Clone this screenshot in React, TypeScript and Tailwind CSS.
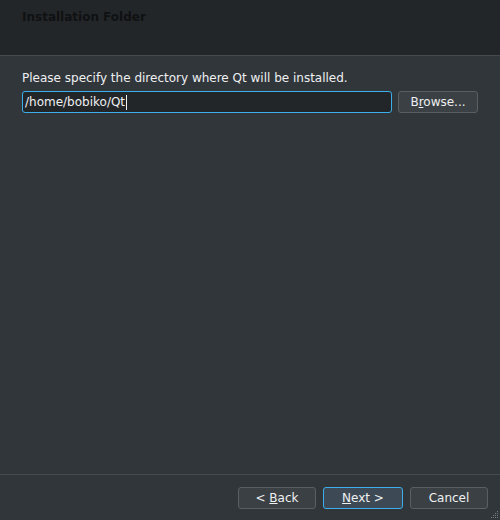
import React from "react";

function Button({
  children,
  primary = false,
  className = "",
}: {
  children: React.ReactNode;
  primary?: boolean;
  className?: string;
}) {
  return (
    <button
      className={`h-[22px] rounded-[3px] border text-[12px] leading-none text-[#eff0f1] ${
        primary
          ? "border-[#3daee9] bg-[#3d4a55]"
          : "border-[#5b5f63] bg-[#3b4045]"
      } ${className}`}
    >
      {children}
    </button>
  );
}

function ResizeGrip() {
  const dots: [number, number][] = [];
  for (let r = 0; r < 4; r++) {
    for (let c = 0; c < 4; c++) {
      if (r + c >= 3) dots.push([c * 2, r * 2]);
    }
  }
  return (
    <svg width="9" height="9" viewBox="0 0 9 9" className="absolute bottom-[1px] right-[1px]">
      {dots.map(([x, y], i) => (
        <rect key={i} x={x + 1} y={y + 1} width="1" height="1" fill="#7a7e82" />
      ))}
    </svg>
  );
}

export default function App() {
  return (
    <div className="relative flex h-[520px] w-[500px] flex-col bg-[#31363b] font-['DejaVu_Sans',sans-serif] text-[12px] text-[#eff0f1]">
      <div className="h-[56px] shrink-0 border-b border-[#464b50] bg-[#232629] px-[22px] pt-[8px]">
        <h1 className="text-[12px] font-bold text-[#0f1112]">Installation Folder</h1>
      </div>

      <div className="flex-1 px-[22px] pt-[15px]">
        <p className="leading-[15px]">Please specify the directory where Qt will be installed.</p>
        <div className="mt-[5px] flex items-center gap-[6px]">
          <div className="flex h-[22px] w-[370px] items-center rounded-[3px] border border-[#3daee9] bg-[#232629] pl-[2px]">
            <span>/home/bobiko/Qt</span>
            <span className="ml-[1px] h-[15px] w-px bg-[#eff0f1]" />
          </div>
          <Button className="w-[80px]">
            B<span className="underline">r</span>owse...
          </Button>
        </div>
      </div>

      <div className="flex h-[46px] shrink-0 items-start justify-end gap-[7px] border-t border-[#464b50] pr-[12px] pt-[12px]">
        <Button className="w-[78px]">
          &lt; <span className="underline">B</span>ack
        </Button>
        <Button primary className="w-[80px]">
          <span className="underline">N</span>ext &gt;
        </Button>
        <Button className="w-[78px]">Cancel</Button>
      </div>

      <ResizeGrip />
    </div>
  );
}
